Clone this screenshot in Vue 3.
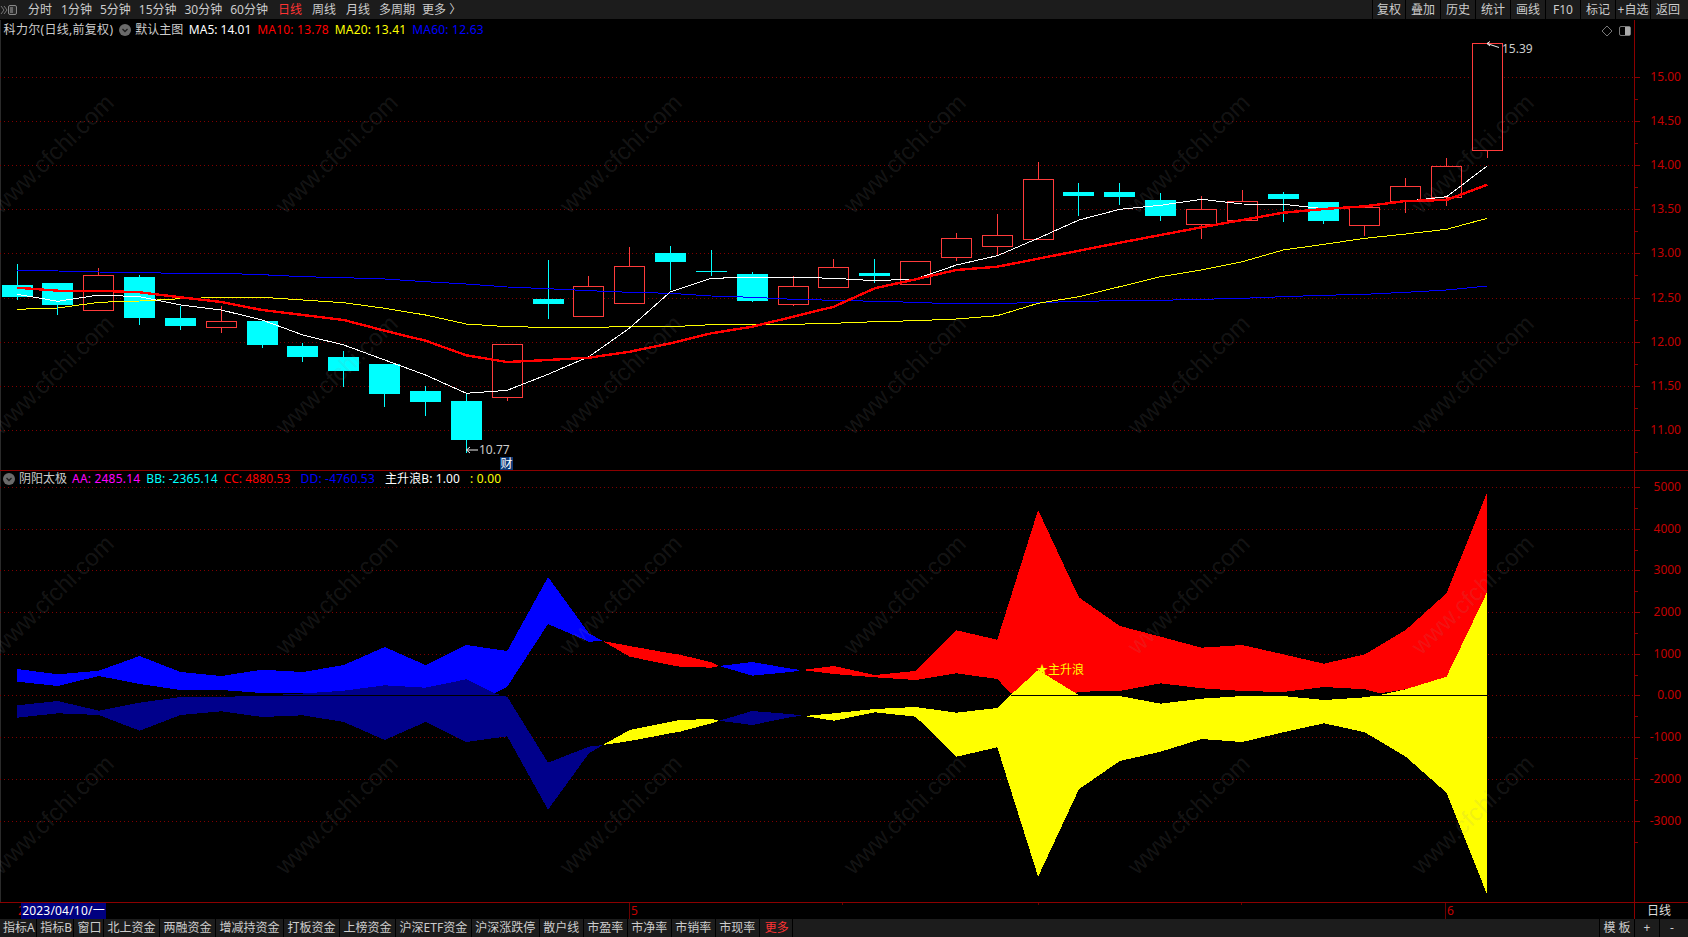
<script setup>
const xAt = (i) => 17.1 + 40.84 * i
const topTabsLeft = ['分时', '1分钟', '5分钟', '15分钟', '30分钟', '60分钟', '日线', '周线', '月线', '多周期', '更多 〉']
const topTabsRight = ['复权', '叠加', '历史', '统计', '画线', 'F10', '标记', '+自选', '返回']
const bottomTabs = ['指标A', '指标B', '窗口', '北上资金', '两融资金', '增减持资金', '打板资金', '上榜资金', '沪深ETF资金', '沪深涨跌停', '散户线', '市盈率', '市净率', '市销率', '市现率', '更多']

const upperGrid = [
  [77, '15.00'], [121, '14.50'], [165, '14.00'], [209, '13.50'], [253, '13.00'],
  [298, '12.50'], [342, '12.00'], [386, '11.50'], [430, '11.00'],
]
const lowerGrid = [
  [487, '5000'], [529, '4000'], [570, '3000'], [612, '2000'], [654, '1000'],
  [695, '0.00'], [737, '-1000'], [779, '-2000'], [821, '-3000'],
]

// kind (c = falling cyan, r = rising red), wick top, body top, body bottom, wick bottom
const raw = [
  ['c', 264, 285, 297, 300], ['c', 283, 283, 305, 315], ['r', 268, 275, 310, 311], ['c', 275, 277, 318, 325],
  ['c', 306, 318, 326, 330], ['r', 306, 321, 327, 333], ['c', 320, 321, 345, 348], ['c', 343, 346, 357, 362],
  ['c', 351, 357, 371, 387], ['c', 364, 364, 394, 407], ['c', 386, 391, 402, 416], ['c', 393, 401, 440, 453],
  ['r', 344, 344, 397, 401], ['c', 260, 299, 304, 319], ['r', 276, 286, 316, 316], ['r', 247, 266, 303, 303],
  ['c', 246, 253, 262, 290], ['c', 250, 271, 272, 276], ['c', 272, 274, 301, 302], ['r', 276, 286, 304, 306],
  ['r', 259, 267, 287, 288], ['c', 259, 273, 276, 283], ['r', 261, 261, 284, 284], ['r', 233, 238, 257, 261],
  ['r', 214, 235, 246, 256], ['r', 162, 179, 239, 239], ['c', 183, 192, 196, 216], ['c', 183, 192, 197, 205],
  ['c', 193, 200, 216, 221], ['r', 196, 209, 224, 239], ['r', 190, 201, 220, 220], ['c', 192, 194, 199, 222],
  ['c', 202, 202, 221, 224], ['r', 207, 207, 225, 236], ['r', 178, 186, 201, 213], ['r', 158, 166, 197, 206],
  ['r', 43, 43, 150, 158],
]
const candles = raw.map(([kind, wt, bt, bb, wb], i) => {
  const c = Math.floor(xAt(i))
  return { i, kind, c, wt, bt, bb, wb, left: c - 15 }
})

const line = (ys) => ys.map((y, i) => `${xAt(i).toFixed(1)},${y}`).join(' ')
const ma5 = line([294.3, 301.3, 295, 296.7, 305, 310, 320, 335, 345, 360, 375, 393.3, 390.3, 374.3, 356.7, 328, 291.7, 278.3, 277.3, 277.3, 278.3, 280.7, 279, 265, 255.7, 238.3, 220, 209.3, 205.3, 199.3, 204, 204.3, 208.7, 207, 201.3, 196.7, 166])
const ma10 = line([287.7, 290.7, 290.7, 292.3, 297.3, 302, 310, 315, 320, 330.7, 340.7, 355.3, 362, 360, 357.7, 351.7, 343.3, 333.3, 326.7, 316.7, 306.7, 288.3, 279.3, 270, 266.7, 258.7, 250.7, 242.7, 235, 227.3, 220, 212.7, 209, 206.3, 201, 200, 184.7])
const ma20 = line([309.3, 308, 302.3, 301, 298.7, 297.3, 297.3, 300, 302.7, 308.3, 315, 324, 326.7, 327.3, 327.3, 326.7, 326.7, 324.7, 324.7, 324.3, 323.3, 321.7, 320.7, 319, 315.7, 303.3, 296.7, 286.7, 276.7, 270, 261.7, 250, 244.3, 238.3, 234, 229.3, 218.3])
const ma60 = line([270.3, 271, 272, 272.7, 273.3, 273.3, 274.7, 276.7, 277.7, 279, 281.7, 284, 287, 288.7, 290.7, 292.3, 293.3, 296, 297.3, 299.3, 300.3, 301.3, 302.3, 304, 303.3, 302.7, 301.3, 300.7, 300.3, 299.3, 298.3, 296.7, 295.3, 294.3, 292.3, 290, 286])

// Points use an index (integer below 100) or a literal x, then y
const px = (p) => (p[0] < 100 ? xAt(p[0]) : p[0])
const band = (top, bottom) =>
  [...top, ...[...bottom].reverse()].map((p) => `${px(p).toFixed(1)},${p[1]}`).join(' ')
const seq = (start, ys) => ys.map((y, k) => [start + k, y])

const blueUpper = band(
  [...seq(0, [669, 674.3, 670.7, 656, 672, 676, 669.7, 672, 665, 647, 665, 645, 651, 577, 633.3]), [602.7, 641]],
  [...seq(0, [681.7, 686, 676, 684, 690, 690, 693, 693.3, 693.3, 693.3, 693.3, 693.3]), [494.6, 693.3], [12, 686.7], [13, 624], [14, 641.7], [602.7, 641]],
)
const navyLower = band(
  [...seq(0, [705.3, 701, 710.7, 702.7, 697, 697, 695.5, 693.5, 690.7, 685.3, 687.7, 679.3]), [494.6, 693.3], [12, 696.7], [13, 762.7], [14, 746.7], [602.7, 745]],
  [...seq(0, [717.7, 713.3, 715, 730.7, 715, 711.3, 717, 715.3, 722, 740, 722, 742, 736.3, 809.7, 753.3]), [602.7, 745]],
)
const red1 = band(
  [[602.7, 641], [15, 646], [16, 653.3], [680, 654.7], [17, 662.3], [719.3, 666]],
  [[602.7, 641], [15, 656.7], [16, 665], [680, 666.7], [17, 667.7], [719.3, 666]],
)
const yellow1 = band(
  [[602.7, 745], [15, 730], [16, 721.7], [680, 720], [17, 719], [719.3, 720.7]],
  [[602.7, 745], [15, 741], [16, 733.3], [680, 731.7], [17, 723.3], [719.3, 720.7]],
)
const blue2 = band(
  [[719.3, 666], [18, 662], [19, 669], [801.7, 670]],
  [[719.3, 666], [18, 675.7], [19, 671.7], [801.7, 670]],
)
const navy2 = band(
  [[719.3, 720.7], [18, 711], [19, 714.3], [804, 716]],
  [[719.3, 720.7], [18, 725], [19, 716.7], [804, 716]],
)
const red2 = band(
  [[801.7, 670], ...seq(20, [666, 675, 671, 630.3, 639.7, 510, 597.3, 626, 636.7, 647.7, 645, 654.3, 663.7, 654.3, 630, 593.3, 492])],
  [[801.7, 670], [20, 674], [21, 677.3], [22, 680], [23, 673.3], [24, 679], [1010.6, 693.3], [1075.9, 693.3], ...seq(26, [691.7, 691, 683.3, 688.3, 691, 692, 687, 689.3]), [1380, 693.3], [34, 689.3], [35, 676.7], [36, 591.7]],
)
const yellow2 = band(
  [[804, 716], [20, 713.3], [21, 709], [22, 707], [23, 712.7], [24, 708], [1010.6, 695], [25, 670], [1075.9, 693.3], ...seq(26, [695.3, 696, 703.7, 698.7, 696, 696, 700, 697.3]), [1380, 695], [34, 689.3], [35, 676.7], [36, 591.7]],
  [[804, 716], [20, 720.7], [21, 712.3], [22, 716.7], [23, 756.7], [24, 747.3], [25, 876.7], ...seq(26, [789.3, 761, 751.7, 739, 742, 732.3, 723.3, 732.3, 756.7, 792.7, 895])],
)

const wmCols = [54, 338, 622, 906, 1190, 1474]
const wmRows = [155, 376, 596, 816]
const marks = wmRows.flatMap((y) => wmCols.map((x) => ({ x, y })))
const minorTicks = [842, 1038, 1241]
</script>

<template>
  <div class="app">
    <header class="topbar">
      <div class="topleft">
        <svg class="logo" width="19" height="20" viewBox="0 0 19 20">
          <path d="M1 6l3 4-3 4M4 6l3 4-3 4" fill="none" stroke="#777" stroke-width="1" />
          <rect x="8.5" y="5.5" width="8" height="9" rx="1.5" fill="#2a2a2a" stroke="#888" />
          <rect x="10" y="7" width="3" height="6" fill="#666" />
        </svg>
        <nav class="nav">
          <span v-for="t in topTabsLeft" :key="t" :class="{ active: t === '日线' }">{{ t }}</span>
        </nav>
      </div>
      <nav class="actions">
        <span v-for="t in topTabsRight" :key="t" class="action">{{ t }}</span>
      </nav>
    </header>

    <main class="panes">
      <section class="pane upper">
        <div class="title title-upper">
          <span class="name stock">科力尔(日线,前复权)</span>
          <svg class="chev" width="12" height="12" viewBox="0 0 12 12">
            <circle cx="6" cy="6" r="6" fill="#6a6a6a" />
            <path d="M3.5 5l2.5 2.5L8.5 5" fill="none" stroke="#1c1c1c" stroke-width="1.3" />
          </svg>
          <span class="name main-name">默认主图</span>
          <span class="white">MA5: 14.01</span>
          <span class="red wide-text">MA10: 13.78</span>
          <span class="yellow wide-text">MA20: 13.41</span>
          <span class="blue wide-text">MA60: 12.63</span>
        </div>
        <svg class="chart" width="1688" height="450" viewBox="0 20 1688 450">
          <g v-for="g in upperGrid" :key="g[1]">
            <line x1="0" :x2="1634" :y1="g[0] + 0.5" :y2="g[0] + 0.5" class="grid" />
            <line x1="1634" x2="1640" :y1="g[0] + 0.5" :y2="g[0] + 0.5" class="tick" />
            <line x1="1634" x2="1638" :y1="g[0] + 22.5" :y2="g[0] + 22.5" class="tick" />
            <text x="1681" :y="g[0] + 3.5" text-anchor="end" class="axis">{{ g[1] }}</text>
          </g>
          <line x1="1634.5" x2="1634.5" y1="20" y2="470" class="tick" />

          <g v-for="c in candles" :key="c.i" shape-rendering="crispEdges">
            <template v-if="c.kind === 'c'">
              <line :x1="c.c + 0.5" :x2="c.c + 0.5" :y1="c.wt" :y2="c.wb" stroke="#00ffff" />
              <rect :x="c.left" :y="c.bt" width="31" :height="Math.max(c.bb - c.bt, 1)" fill="#00ffff" />
            </template>
            <template v-else>
              <line :x1="c.c + 0.5" :x2="c.c + 0.5" :y1="c.wt" :y2="c.wb" stroke="#ff3b3b" />
              <rect :x="c.left + 0.5" :y="c.bt + 0.5" width="30" :height="c.bb - c.bt" fill="#000" stroke="#ff3b3b" />
            </template>
          </g>

          <polyline :points="ma60" class="ma" stroke="#0000ff" />
          <polyline :points="ma20" class="ma" stroke="#ffff00" />
          <polyline :points="ma5" class="ma" stroke="#ffffff" />
          <polyline :points="ma10" class="ma" stroke="#ff0000" stroke-width="2.4" />

          <polyline points="1487,43.5 1499,47.5" class="arrow" />
          <polyline points="1490,41.5 1487,43.5 1490,46" class="arrow" />
          <text x="1502" y="53" class="price">15.39</text>
          <polyline points="466.5,450 478,450" class="arrow" />
          <polyline points="470,447 466.5,450 470,453" class="arrow" />
          <text x="479" y="454" class="price">10.77</text>
          <rect x="500" y="457" width="13" height="13" fill="#0c3a78" />
          <text x="500.5" y="468" class="badge">财</text>
        </svg>
      </section>

      <section class="pane lower">
        <div class="title title-lower">
          <svg class="chev" width="12" height="12" viewBox="0 0 12 12">
            <circle cx="6" cy="6" r="6" fill="#6a6a6a" />
            <path d="M3.5 5l2.5 2.5L8.5 5" fill="none" stroke="#1c1c1c" stroke-width="1.3" />
          </svg>
          <span class="name sub-name">阴阳太极</span>
          <span class="magenta wide-text">AA: 2485.14</span>
          <span class="cyan slight-text">BB: -2365.14</span>
          <span class="red slight-text">CC: 4880.53</span>
          <span class="blue wide-text gapped">DD: -4760.53</span>
          <span class="white slight-text gapped">主升浪B: 1.00</span>
          <span class="yellow wide-text gapped">: 0.00</span>
        </div>
        <svg class="chart" width="1688" height="431" viewBox="0 471 1688 431">
          <g v-for="g in lowerGrid" :key="g[1]">
            <line x1="0" :x2="1634" :y1="g[0] + 0.5" :y2="g[0] + 0.5" class="grid" />
            <line x1="1634" x2="1640" :y1="g[0] + 0.5" :y2="g[0] + 0.5" class="tick" />
            <line x1="1634" x2="1638" :y1="g[0] + 21.5" :y2="g[0] + 21.5" class="tick" />
            <text x="1681" :y="g[0] + 3.5" text-anchor="end" class="axis">{{ g[1] }}</text>
          </g>
          <line x1="1634.5" x2="1634.5" y1="471" y2="902" class="tick" />

          <g shape-rendering="crispEdges">
            <polygon :points="blueUpper" fill="#0000ff" />
            <polygon :points="navyLower" fill="#00008b" />
            <polygon :points="red1" fill="#ff0000" />
            <polygon :points="yellow1" fill="#ffff00" />
            <polygon :points="blue2" fill="#0000ff" />
            <polygon :points="navy2" fill="#00008b" />
            <polygon :points="red2" fill="#ff0000" />
            <polygon :points="yellow2" fill="#ffff00" />
            <line x1="228" x2="507" y1="695.5" y2="695.5" stroke="#000" />
            <line x1="1011" x2="1488" y1="695.5" y2="695.5" stroke="#000" />
          </g>
          <text x="1036" y="674" class="signal">★主升浪</text>
        </svg>
      </section>

      <svg class="watermark" width="1688" height="882" viewBox="0 20 1688 882">
        <text
          v-for="m in marks"
          :key="m.x + '-' + m.y"
          :x="m.x"
          :y="m.y"
          :transform="`rotate(-44 ${m.x} ${m.y})`"
          text-anchor="middle"
          dominant-baseline="middle"
          class="wm"
        >www.cfchi.com</text>
      </svg>
    </main>

    <div class="timeaxis">
      <div class="scale">
        <span class="clip">2</span>
        <span class="date">2023/04/10/一</span>
        <span class="period period-5">5</span>
        <span class="period period-6">6</span>
        <i v-for="t in minorTicks" :key="t" class="minor" :style="{ left: t + 'px' }"></i>
      </div>
      <div class="cycle">日线</div>
    </div>

    <footer class="bottombar">
      <nav class="tabs">
        <span
          v-for="(t, i) in bottomTabs"
          :key="t"
          class="tab"
          :class="{ tight: i < 3, more: t === '更多' }"
        >{{ t }}</span>
      </nav>
      <nav class="tools">
        <span class="tool wide">模 板</span>
        <span class="tool">+</span>
        <span class="tool">-</span>
      </nav>
    </footer>

    <div class="layout-icons">
      <svg width="30" height="12" viewBox="0 0 30 12">
        <path d="M6 1l5 5-5 5-5-5z" fill="none" stroke="#777" />
        <rect x="18.5" y="1.5" width="11" height="9" rx="1.5" fill="none" stroke="#777" />
        <rect x="24" y="2" width="5" height="8" fill="#aaa" />
      </svg>
    </div>
  </div>
</template>

<style>
html, body { margin: 0; background: #000; }
</style>

<style scoped>
.app {
  position: relative;
  width: 1688px;
  height: 937px;
  display: flex;
  flex-direction: column;
  overflow: hidden;
  background: #000;
  color: #ccc;
  font: 12px/16px "Noto Sans", "Noto Sans CJK SC", sans-serif;
}
.topbar {
  height: 20px;
  flex: none;
  display: flex;
  justify-content: space-between;
  background: #1c1c1c;
  line-height: 19px;
  border-bottom: 1px solid #000;
  box-sizing: border-box;
}
.topleft { display: flex; }
.logo { flex: none; display: block; }
.nav { display: flex; gap: 8px; padding-left: 9px; }
.nav span:nth-child(2) { margin-left: 1px; }
.nav span:nth-child(7),
.nav span:nth-child(8),
.nav span:nth-child(9) { margin-left: 2px; }
.nav span:nth-child(10) { margin-left: 1px; }
.nav span:nth-child(11) { margin-left: -1px; }
.nav .active { color: #ff3333; }
.actions { display: flex; padding-right: 3px; }
.action {
  width: 35px;
  text-align: center;
  border-left: 1px solid #000;
  box-sizing: border-box;
}
.action:first-child { width: 33px; }

.panes { position: relative; flex: none; height: 883px; display: flex; flex-direction: column; }
.pane { position: relative; box-shadow: inset 1px 0 #2a2a2a; }
.upper { height: 450px; border-bottom: 1px solid #8b0000; }
.lower { height: 431px; border-bottom: 1px solid #8b0000; }
.chart { display: block; }
.title {
  position: absolute;
  display: flex;
  align-items: center;
  white-space: nowrap;
  z-index: 2;
}
.title-upper { left: 3.6px; top: 2px; gap: 6px; height: 16px; }
.title-lower { left: 3px; top: 0; gap: 6px; height: 16px; }
.stock { letter-spacing: 0.3px; }
.main-name { margin-left: -2px; margin-right: -0.5px; }
.sub-name { margin-left: -2px; margin-right: -1px; }
.wide-text { letter-spacing: 0.2px; }
.slight-text { letter-spacing: 0.1px; }
.gapped { margin-left: 4px; }
.name { color: #ccc; }
.chev { flex: none; }
.white { color: #fff; }
.red { color: #f00; }
.yellow { color: #ff0; }
.blue { color: #00f; }
.magenta { color: #f0f; }
.cyan { color: #0ff; }

.grid { stroke: #800000; stroke-dasharray: 1 3; }
.tick { stroke: #8b0000; }
.axis { fill: #c40000; font-size: 12px; }
.ma { fill: none; shape-rendering: crispEdges; }
.arrow { fill: none; stroke: #eee; }
.price { fill: #ccc; font-size: 12px; }
.badge { fill: #fff; font-size: 12px; }
.signal { fill: #ffff00; font-size: 12px; }

.watermark { position: absolute; left: 0; top: 0; pointer-events: none; }
.wm {
  fill: rgba(150, 150, 150, 0.15);
  font: 24px "Liberation Sans", sans-serif;
}

.timeaxis { height: 16px; flex: none; display: flex; }
.scale { position: relative; width: 1634px; border-right: 1px solid #8b0000; }
.clip { position: absolute; left: 18px; color: #c00; }
.date {
  position: absolute;
  left: 21px;
  top: 0;
  width: 85px;
  height: 16px;
  text-align: center;
  color: #fff;
  letter-spacing: 0.2px;
  background: #000080;
}
.period {
  position: absolute;
  top: 0;
  color: #c40000;
  padding-left: 1px;
  border-left: 1px solid #6b0000;
  line-height: 16px;
}
.period-5 { left: 629px; }
.period-6 { left: 1445px; }
.minor { position: absolute; top: 0; width: 1px; height: 2px; background: #6b0000; }
.cycle { flex: 1; text-align: center; padding-right: 5px; color: #ddd; }

.bottombar {
  height: 18px;
  flex: none;
  display: flex;
  justify-content: space-between;
  background: #1c1c1c;
  line-height: 18px;
}
.tabs { display: flex; }
.tab { padding: 0 3.5px; border-right: 1px solid #000; }
.tight { padding: 0 1.5px 0 3px; }
.more { color: #ff3333; padding-left: 5px; }
.tools { display: flex; padding-right: 4px; }
.tool {
  width: 25px;
  box-sizing: border-box;
  text-align: center;
  border-left: 1px solid #000;
}
.wide { width: 35px; }

.layout-icons { position: absolute; left: 1601px; top: 25px; line-height: 0; }
</style>
